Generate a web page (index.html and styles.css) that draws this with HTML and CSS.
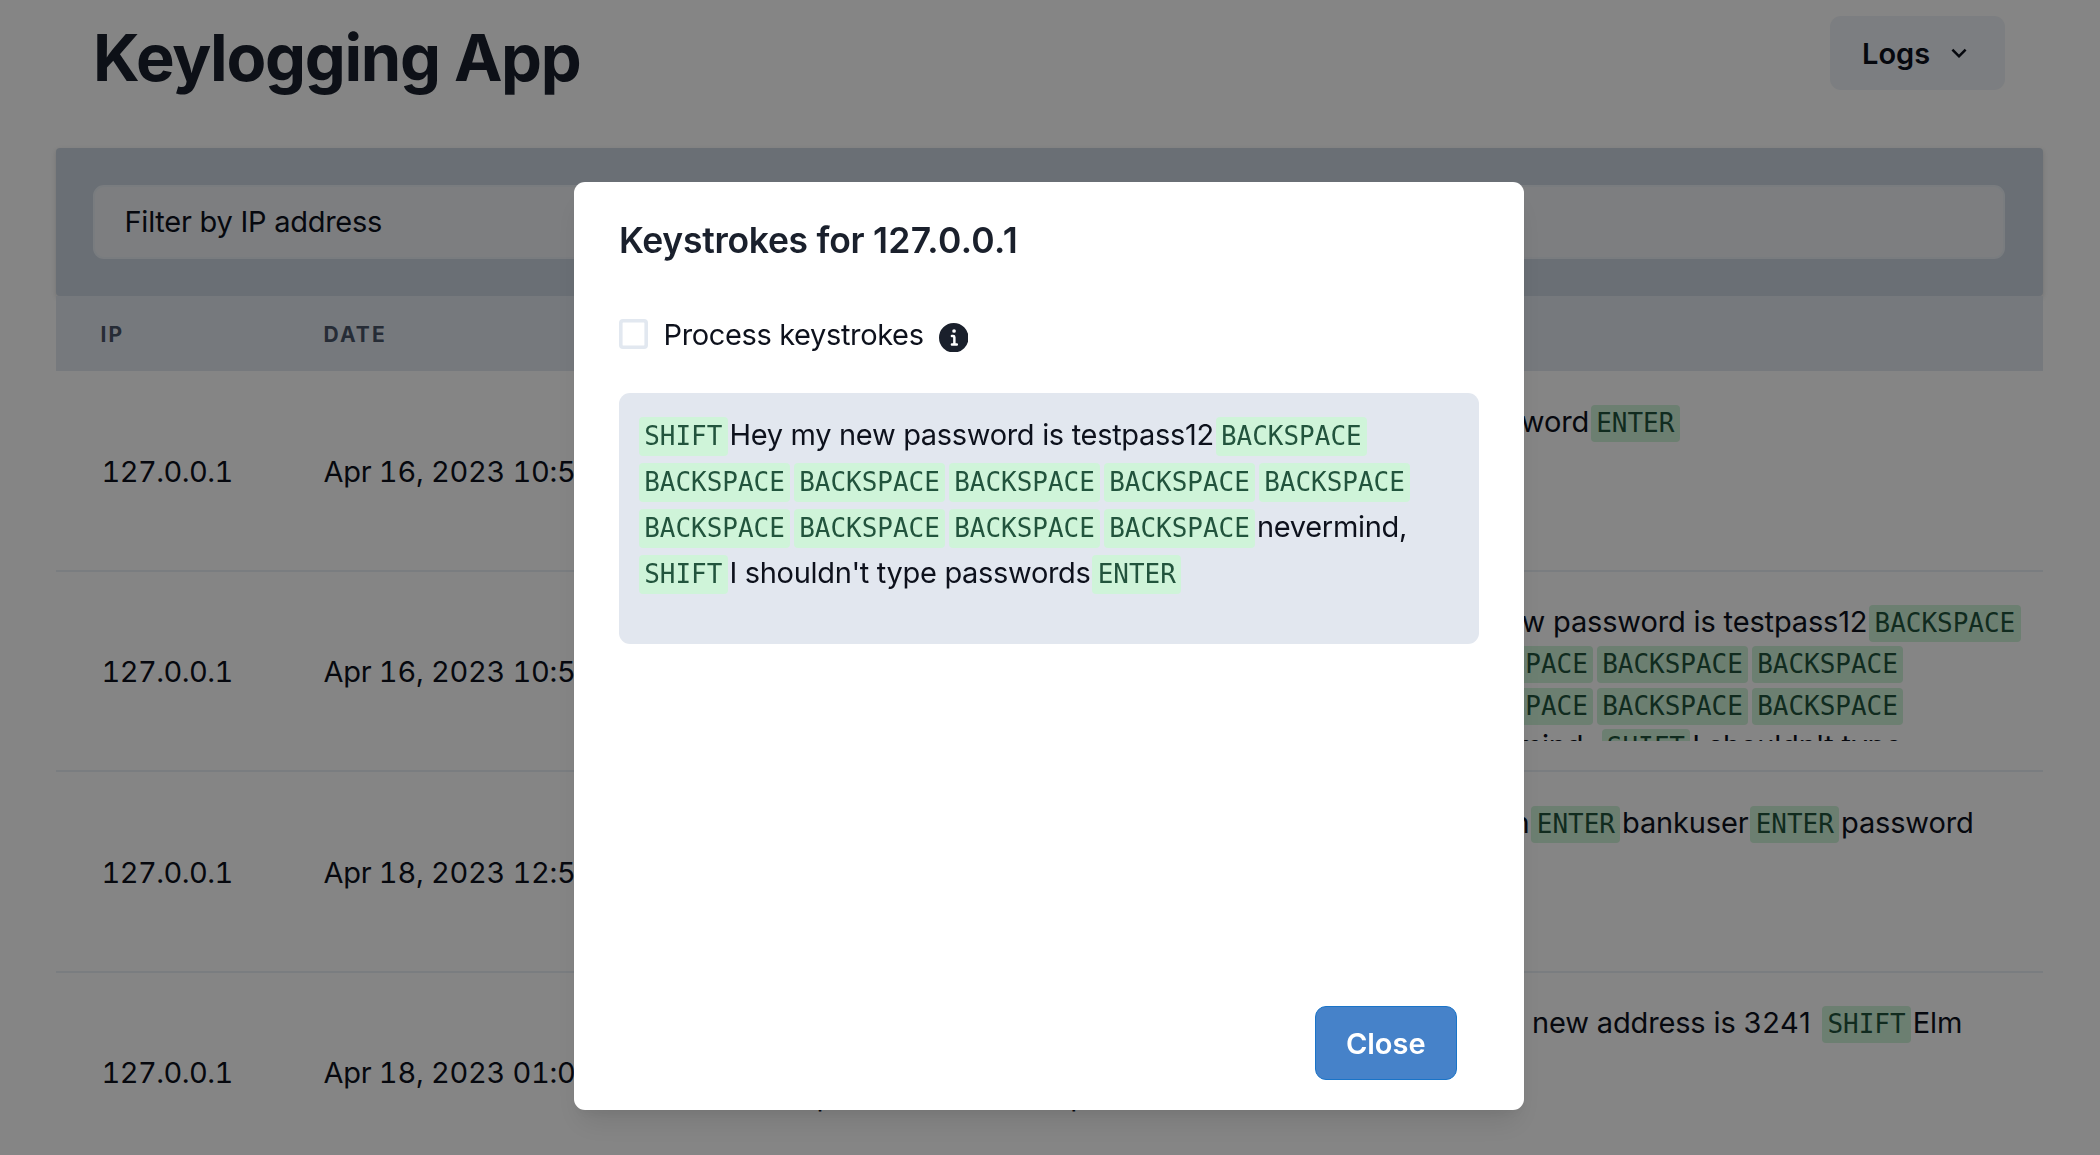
FILE: index.html
```
<!DOCTYPE html>
<html lang="en">
<head>
<meta charset="utf-8">
<title>Keylogging App</title>
<link rel="stylesheet" href="styles.css">
</head>
<body>
<div class="page">
  <header class="topbar">
    <h1 class="brand">Keylogging App</h1>
    <button class="menu-btn">Logs
      <svg class="chevron" viewBox="0 0 24 24" fill="currentColor"><path d="M16.59 8.59L12 13.17 7.41 8.59 6 10l6 6 6-6z"/></svg>
    </button>
  </header>
  <section class="filter"><div class="input">Filter by IP address</div></section>
  <div class="thead"><div>IP</div><div>Date</div></div>
  <div class="row">
    <div class="cell ip">127.0.0.1</div>
    <div class="cell">Apr 16, 2023 10:53 AM</div>
    <div class="cell"></div>
    <div class="keys"><div class="line lead-a">password<code>ENTER</code></div></div>
  </div>
  <div class="row">
    <div class="cell ip">127.0.0.1</div>
    <div class="cell">Apr 16, 2023 10:54 AM</div>
    <div class="cell"></div>
    <div class="keys">
      <div class="line"><code>SHIFT</code>Hey my new password is testpass12<code>BACKSPACE</code></div>
      <div class="line"><code>BACKSPACE</code><code>BACKSPACE</code><code>BACKSPACE</code><code>BACKSPACE</code></div>
      <div class="line"><code>BACKSPACE</code><code>BACKSPACE</code><code>BACKSPACE</code><code>BACKSPACE</code></div>
      <div class="line"><code>BACKSPACE</code>nevermind, <code>SHIFT</code>I shouldn't type</div>
    </div>
  </div>
  <div class="row">
    <div class="cell ip">127.0.0.1</div>
    <div class="cell">Apr 18, 2023 12:58 PM</div>
    <div class="cell"></div>
    <div class="keys"><div class="line lead-b">login<code>ENTER</code>bankuser<code>ENTER</code>password</div></div>
  </div>
  <div class="row">
    <div class="cell ip">127.0.0.1</div>
    <div class="cell">Apr 18, 2023 01:02 PM</div>
    <div class="cell site"><span>post</span><span>post</span></div>
    <div class="keys"><div class="line lead-c">new address is <span class="num">3241 </span><code>SHIFT</code>Elm</div></div>
  </div>
</div>

<div class="overlay">
  <div class="modal" role="dialog">
    <h2 class="modal-title">Keystrokes for <span class="addr">127.0.0.1</span></h2>
    <div class="option">
      <span class="checkbox"></span>
      <span class="option-label">Process keystrokes</span>
      <svg class="info" viewBox="0 0 24 24"><path fill="currentColor" d="M12,0A12,12,0,1,0,24,12,12.013,12.013,0,0,0,12,0Zm.25,5a1.5,1.5,0,1,1-1.5,1.5A1.5,1.5,0,0,1,12.25,5ZM14.5,18.5h-4a1,1,0,0,1,0-2h.75a.25.25,0,0,0,.25-.25v-4.5a.25.25,0,0,0-.25-.25H10.5a1,1,0,0,1,0-2h1a2,2,0,0,1,2,2v4.75a.25.25,0,0,0,.25.25h.75a1,1,0,1,1,0,2Z"/></svg>
    </div>
    <div class="log">
      <div class="line"><code>SHIFT</code>Hey my new password is testpass12<code>BACKSPACE</code></div>
      <div class="line"><code>BACKSPACE</code><code>BACKSPACE</code><code>BACKSPACE</code><code>BACKSPACE</code><code>BACKSPACE</code></div>
      <div class="line"><code>BACKSPACE</code><code>BACKSPACE</code><code>BACKSPACE</code><code>BACKSPACE</code>nevermind,</div>
      <div class="line"><code>SHIFT</code>I shouldn't type passwords<code>ENTER</code></div>
    </div>
    <footer class="modal-foot"><button class="close-btn">Close</button></footer>
  </div>
</div>
</body>
</html>
```
FILE: styles.css
```
* { box-sizing: border-box; }
html, body { margin: 0; height: 1155px; overflow: hidden; }
body {
  font-family: Inter, "Liberation Sans", sans-serif;
  font-size: 29px;
  letter-spacing: -.32px;
  color: #0d111c;
  background: #fff;
}
h1, h2 { margin: 0; }
button { font-family: inherit; border: 0; padding: 0; }

.page { padding: 0 57.5px 0 55.5px; }

.topbar {
  display: flex;
  justify-content: space-between;
  align-items: flex-start;
  height: 147.5px;
  padding: 16px 37.5px 0 37.5px;
}
.brand {
  font-size: 65px;
  font-weight: 700;
  line-height: 83px;
  letter-spacing: -1.3px;
  color: #1a202c;
}
.menu-btn {
  display: flex;
  align-items: center;
  width: 175px;
  height: 74px;
  padding-left: 32px;
  gap: 14px;
  border-radius: 11px;
  background: #edf2f7;
  color: #0d111c;
  font-size: 29px;
  font-weight: 600;
}
.chevron { width: 30px; height: 30px; }

.filter {
  height: 148.2px;
  padding: 37.5px 37.5px 0;
  background: #cbd5e0;
  border-radius: 4px;
  box-shadow: 0 2px 5px rgba(0, 0, 0, .15);
}
.input {
  height: 74px;
  padding-left: 29.5px;
  line-height: 69px;
  border: 2px solid #e9eef4;
  border-radius: 11px;
  background: #eff2f5;
  letter-spacing: -.25px;
}

.thead, .row {
  display: grid;
  grid-template-columns: 222px 450px 509px 1fr;
}
.thead {
  height: 75.8px;
  background: #e2e8f0;
  color: #4a5568;
  font-size: 21px;
  font-weight: 700;
  letter-spacing: 2.1px;
  line-height: 77px;
  text-transform: uppercase;
}
.thead > div, .cell { padding-left: 46px; white-space: nowrap; }
.thead > div:first-child { padding-left: 45px; }

.row {
  height: 200.4px;
  padding: 29.5px 0 28px;
  border-bottom: 2px solid #eaeff5;
  letter-spacing: -.15px;
}
.cell { line-height: 142px; letter-spacing: -.28px; font-variant-numeric: tabular-nums; }
.ip { letter-spacing: -.55px; }
.site { display: flex; gap: 195px; padding-left: 89px; line-height: 188px; }
.keys { padding-left: 48.5px; overflow: hidden; height: 140px; }
.keys .line { height: 41.1px; line-height: 41.1px; }
.line { white-space: pre; }
.lead-a { padding-left: 171.5px; }
.lead-b { padding-left: 179px; }
.lead-c { padding-left: 247px; }
.num { letter-spacing: .7px; }

code {
  display: inline-block;
  margin: 0 1.85px;
  padding: 0 5.3px;
  border-radius: 4px;
  background: #cff4d9;
  color: #22543d;
  font-family: "DejaVu Sans Mono", monospace;
  font-size: 25.98px;
  line-height: 38.7px;
  letter-spacing: 0;
}
.keys code { line-height: 37px; }

.overlay {
  position: fixed;
  inset: 0;
  display: flex;
  justify-content: center;
  align-items: flex-start;
  padding-top: 182px;
  padding-right: 2px;
  background: rgba(0, 0, 0, .48);
}
.modal {
  display: flex;
  flex-direction: column;
  width: 950px;
  height: 927.6px;
  padding: 0 45px 29.6px 44.5px;
  border-radius: 11px;
  background: #fff;
  box-shadow: 0 18px 28px -6px rgba(0, 0, 0, .1), 0 7px 11px -4px rgba(0, 0, 0, .05);
}
.modal-title {
  padding: 37px 0 0 .5px;
  font-size: 35.5px;
  font-weight: 600;
  line-height: 44px;
  letter-spacing: -.28px;
  color: #1a202c;
}
.addr { letter-spacing: .35px; }
.option {
  display: flex;
  align-items: center;
  height: 44px;
  margin-top: 49px;
}
.checkbox {
  width: 29.5px;
  height: 29.5px;
  box-shadow: inset 0 0 0 3.6px #e2e8f0;
  border-radius: 4px;
}
.option-label { margin-left: 15.5px; letter-spacing: -.36px; }
.info { width: 29.5px; height: 29.5px; margin: 7px 0 0 15px; color: #1a202c; }
.log {
  height: 250.4px;
  margin-top: 37.4px;
  padding: 18.8px 18.5px;
  border-radius: 11px;
  background: #e2e7ef;
}
.log .line { height: 46px; line-height: 46px; }
.modal-foot {
  display: flex;
  justify-content: flex-end;
  margin-top: auto;
  padding-right: 22px;
}
.close-btn {
  width: 142.5px;
  height: 74px;
  border: 1px solid #1a74c8;
  border-radius: 11px;
  background: #4682c9;
  color: #fff;
  font-size: 29px;
  font-weight: 600;
}
```
